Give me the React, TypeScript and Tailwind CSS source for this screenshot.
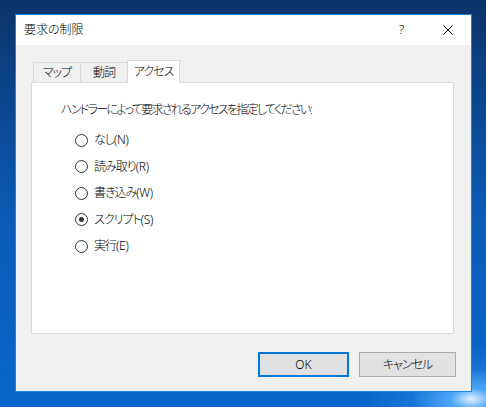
import { useState } from "react"

const OPTIONS = [
  ["なし", "(N)"],
  ["読み取り", "(R)"],
  ["書き込み", "(W)"],
  ["スクリプト", "(S)"],
  ["実行", "(E)"],
]

function Radio({ label, key2, checked, onClick }: { label: string; key2: string; checked: boolean; onClick: () => void }) {
  return (
    <div className="flex items-center h-[26.5px] cursor-default" onClick={onClick}>
      <span className="w-[13px] h-[13px] rounded-full border border-[#333] bg-white flex items-center justify-center">
        {checked && <span className="w-[5px] h-[5px] rounded-full bg-[#333]" />}
      </span>
      <span className="ml-[6px] leading-[16px]">
        <span className="tracking-[-1px]">{label}</span>
        <span className="tracking-[-0.3px]">{key2}</span>
      </span>
    </div>
  )
}

export default function App() {
  const [access, setAccess] = useState(3)
  const tabs = ["マップ", "動詞"]

  return (
    <div className="w-[486px] h-[407px] overflow-hidden pt-[14px] pl-[15px] bg-[radial-gradient(ellipse_60px_30px_at_97%_98%,rgba(235,248,255,0.95)_0%,rgba(90,180,255,0.7)_35%,transparent_100%),radial-gradient(ellipse_120px_60px_at_100%_100%,rgba(60,150,240,0.8)_0%,transparent_100%),linear-gradient(180deg,#0d3366_0%,#0b3f80_15%,#0c5cb8_55%,#0a66cc_100%)] font-['Noto_Sans','Noto_Sans_CJK_JP',sans-serif] font-light text-[12px] text-black [font-feature-settings:'palt']">
      <div className="w-[457px] h-[378px] border border-[#1883d7] bg-[#f0f0f0] flex flex-col">
        {/* title bar */}
        <div className="h-[30px] bg-white flex items-center shrink-0">
          <span className="pl-[8px] flex-1 leading-[16px]">要求の制限</span>
          <div className="w-[46px] h-[30px] flex items-center justify-center text-[13px] pr-px">?</div>
          <div className="w-[46px] h-[30px] flex items-center justify-center">
            <svg width="10" height="10" viewBox="0 0 10 10">
              <path d="M0.5 0.5 L9.5 9.5 M9.5 0.5 L0.5 9.5" stroke="#000" strokeWidth="1" fill="none" />
            </svg>
          </div>
        </div>

        {/* body */}
        <div className="flex-1 pt-[15px] pl-[15px] pr-[17px] flex flex-col">
          <div className="flex items-end pl-[2px] h-[22px]">
            {tabs.map(t => (
              <div
                key={t}
                className="h-[20px] w-[47px] border-t border-l border-[#d9d9d9] bg-[#f0f0f0] flex items-center justify-center leading-[16px] tracking-[-1px]"
              >
                {t}
              </div>
            ))}
            <div className="relative z-10 h-[23px] w-[53px] -mb-px border-t border-l border-r border-[#d9d9d9] bg-white flex items-start justify-center pt-[3px] leading-[16px] tracking-[-1px]">
              アクセス
            </div>
          </div>

          <div className="h-[252px] border border-[#d9d9d9] bg-white pt-[19px] pl-[29px]">
            <div className="leading-[16px] tracking-[-1.7px]">ハンドラーによって要求されるアクセスを指定してください:</div>
            <div className="mt-[9px] pl-[14px] flex flex-col">
              {OPTIONS.map(([l, k], i) => (
                <Radio key={l} label={l} key2={k} checked={access === i} onClick={() => setAccess(i)} />
              ))}
            </div>
          </div>

          <div className="mt-[18px] flex justify-end gap-[10px] mr-[-2px]">
            <button className="w-[91px] h-[25px] border-2 border-[#0078d7] bg-[#e1e1e1] leading-[16px]">OK</button>
            <button className="w-[97px] h-[25px] border border-[#adadad] bg-[#e1e1e1] leading-[16px] tracking-[-1px]">キャンセル</button>
          </div>
        </div>
      </div>
    </div>
  )
}
